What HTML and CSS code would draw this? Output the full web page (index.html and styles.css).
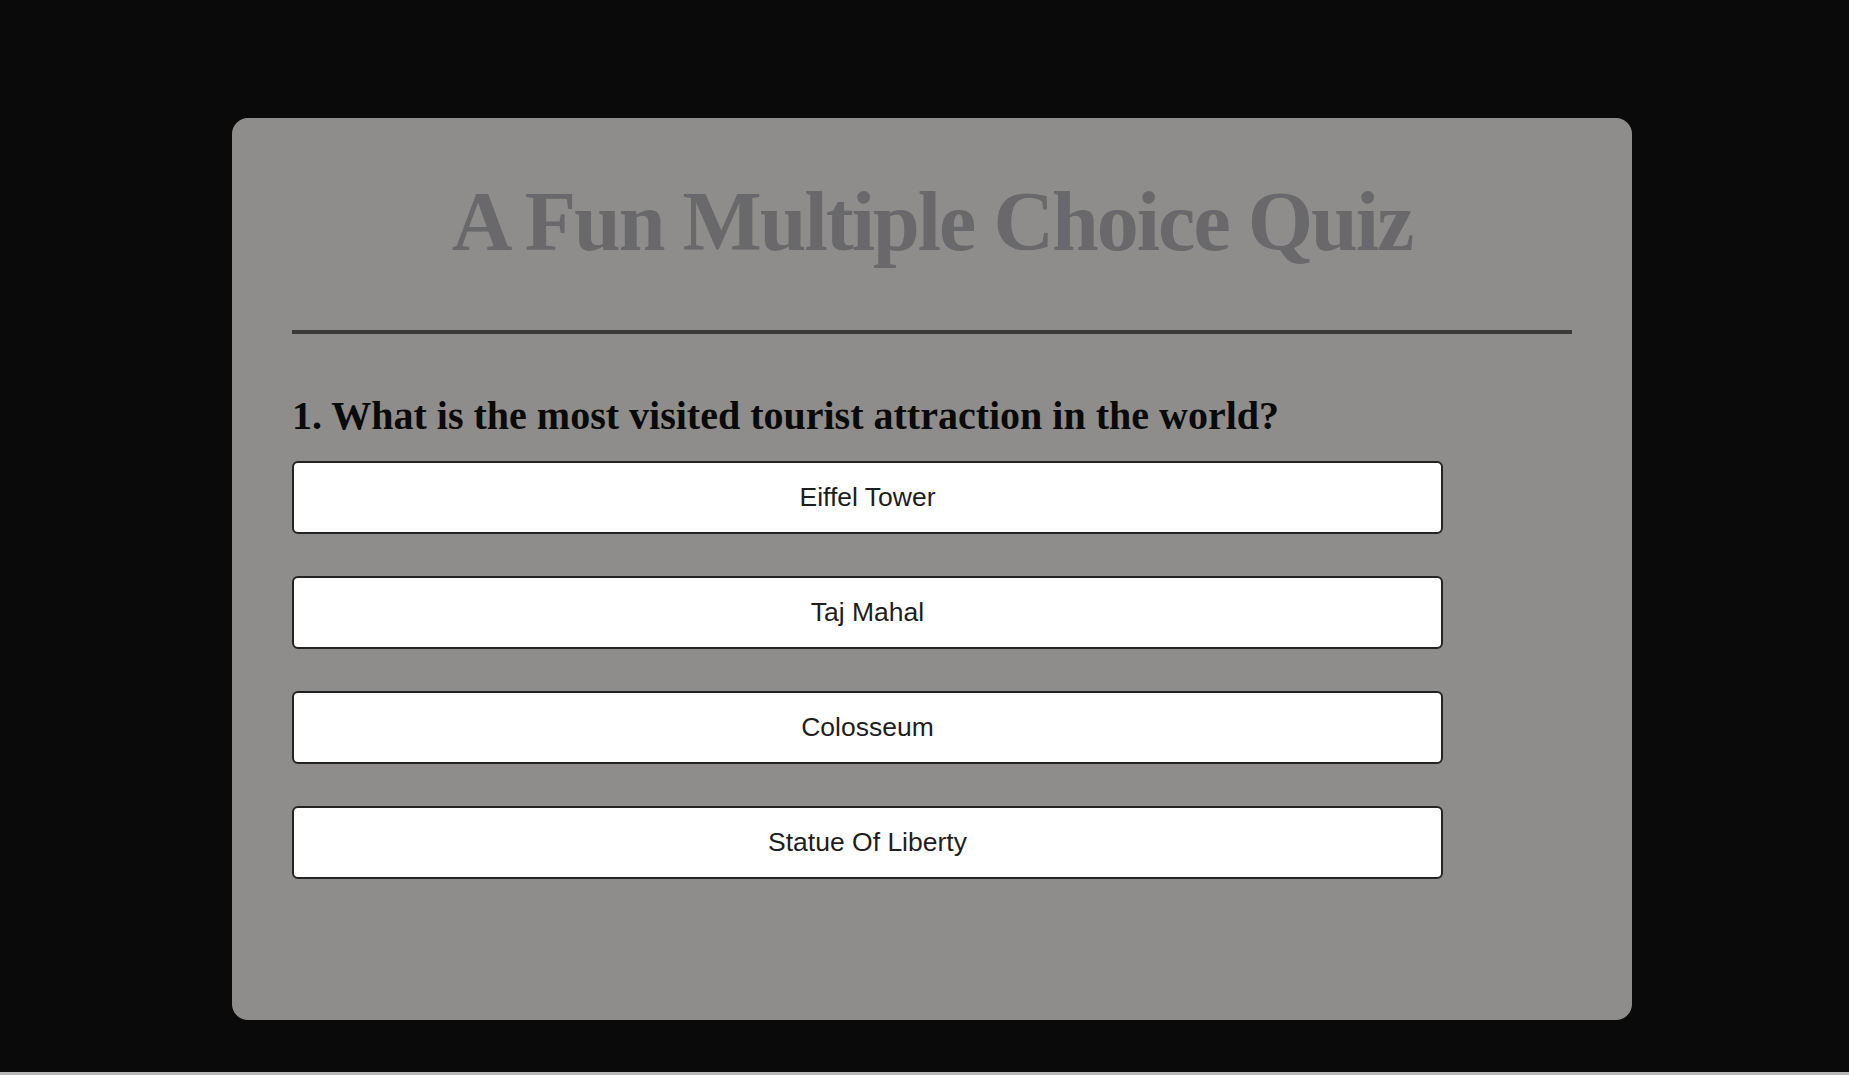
FILE: index.html
```html
<!DOCTYPE html>
<html lang="en">
<head>
<meta charset="utf-8">
<title>A Fun Multiple Choice Quiz</title>
<link rel="stylesheet" href="styles.css">
</head>
<body>
  <main class="quiz">
    <h1 class="quiz-title">A Fun Multiple Choice Quiz</h1>
    <hr class="divider">
    <h2 class="question">1. What is the most visited tourist attraction in the world?</h2>
    <div class="answers">
      <button class="answer">Eiffel Tower</button>
      <button class="answer">Taj Mahal</button>
      <button class="answer">Colosseum</button>
      <button class="answer">Statue Of Liberty</button>
    </div>
  </main>
  <div class="bottom-strip"></div>
</body>
</html>
```

FILE: styles.css
```css
html, body {
  margin: 0;
  padding: 0;
}
body {
  background: #0a0a0a;
  height: 1075px;
  display: flex;
  flex-direction: column;
  font-family: "Liberation Serif", "Times New Roman", serif;
  overflow: hidden;
}
.quiz {
  margin: 118px 0 0 232px;
  width: 1400px;
  height: 902px;
  box-sizing: border-box;
  background: #8e8d8b;
  border-radius: 16px;
  padding: 56px 60px 0;
}
.quiz-title {
  margin: 0;
  font-size: 84px;
  line-height: 96px;
  font-weight: bold;
  letter-spacing: -2px;
  color: #69696b;
  text-align: center;
}
.divider {
  margin: 60px 0 0;
  border: none;
  height: 4px;
  background: #3a3a3a;
}
.question {
  margin: 59px 0 0;
  font-size: 40px;
  line-height: 46px;
  font-weight: bold;
  color: #0a0a0a;
}
.answers {
  margin-top: 22px;
  display: flex;
  flex-direction: column;
  gap: 42px;
  width: 1151px;
}
.answer {
  height: 73px;
  box-sizing: border-box;
  background: #ffffff;
  border: 2px solid #232323;
  border-radius: 6px;
  font-family: "Liberation Sans", Arial, sans-serif;
  font-size: 26.5px;
  color: #1e1e1e;
  padding: 0;
  display: flex;
  align-items: center;
  justify-content: center;
}
.bottom-strip {
  margin-top: auto;
  height: 3px;
  background: #b8b8b8;
}
```
